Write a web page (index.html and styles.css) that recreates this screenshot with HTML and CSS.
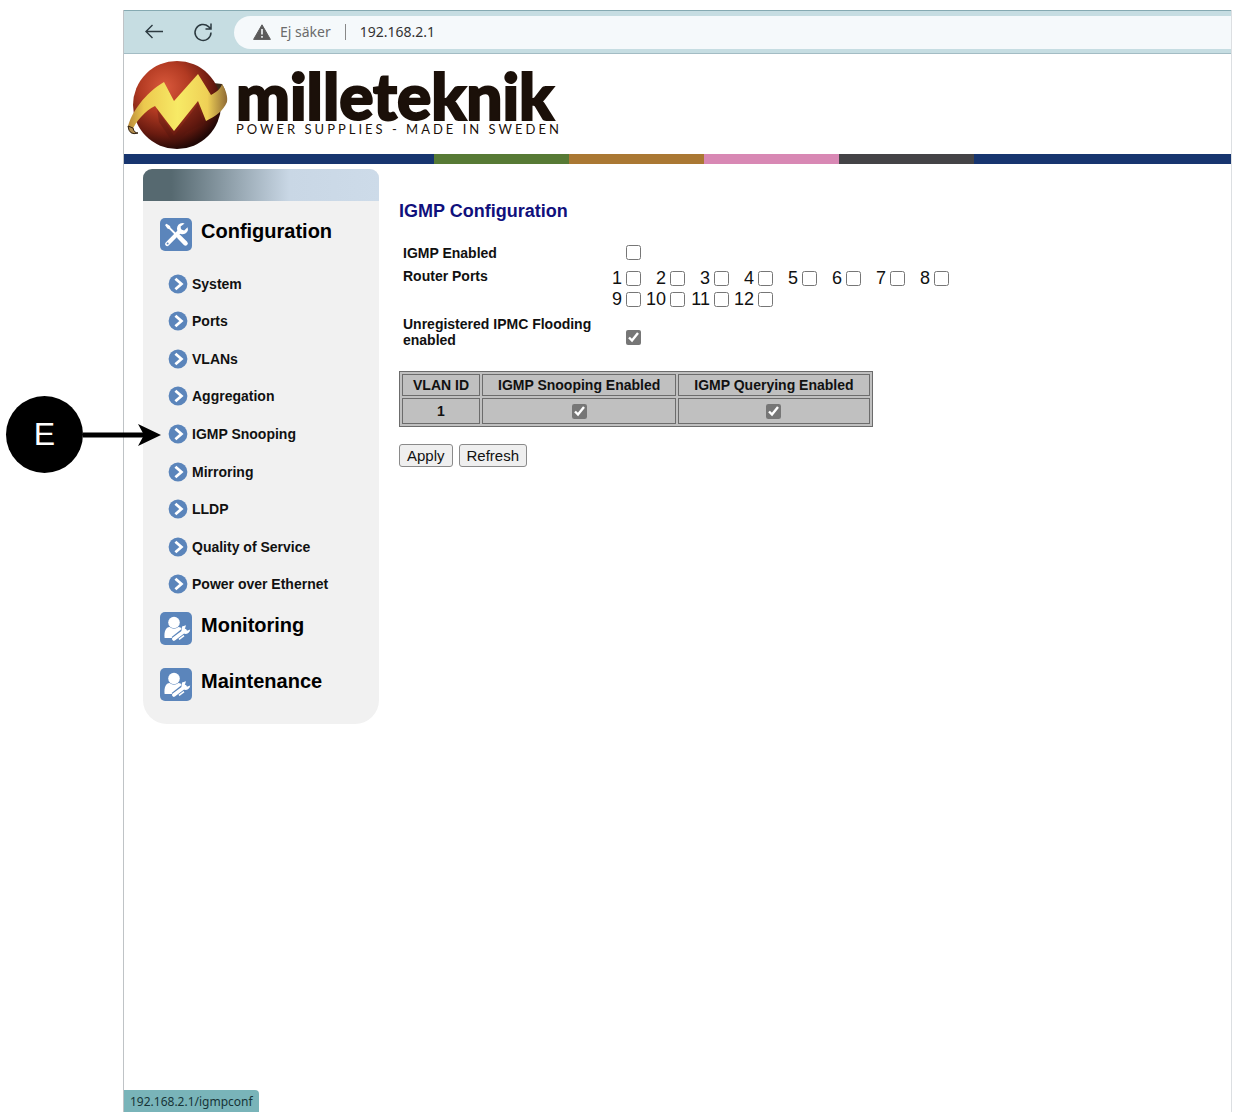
FILE: index.html
```html
<!DOCTYPE html>
<html lang="sv">
<head>
<meta charset="utf-8">
<meta name="viewport" content="width=device-width, initial-scale=1">
<title>IGMP Configuration</title>
<link rel="stylesheet" href="styles.css">
</head>
<body>
<svg class="symbols" aria-hidden="true">
  <symbol id="chevron" viewBox="0 0 20 20">
    <circle cx="10" cy="10" r="9.4" fill="#5b85bb"/>
    <path d="M7.400 4.800 L13.400 10 L7.400 15.200" fill="none" stroke="#fff" stroke-width="2.8"/>
  </symbol>
  <symbol id="tools" viewBox="0 0 32 33">
    <rect width="32" height="33" rx="5" fill="#5b85bb"/>
    <path d="M5 7 L6.500 5.800 L10 8 L10.600 9.800 L17 16 L15.600 17.400 L9.400 11.200 L7.400 10.400 Z" fill="#fff"/>
    <path d="M19.200 19 L25.500 25.400" stroke="#fff" stroke-width="4.600" stroke-linecap="round"/>
    <path d="M7.200 26 L20 13" stroke="#fff" stroke-width="4.200" stroke-linecap="round"/>
    <path d="M24.600 5.400 A5.600 5.600 0 1 0 28 12 L27.600 9.200 L24.200 12.400 L21 11.600 L20.600 8.600 Z" fill="#fff"/>
    <circle cx="7.600" cy="25.600" r="1" fill="#5b85bb"/>
  </symbol>
  <symbol id="person" viewBox="0 0 32 33">
    <rect width="32" height="33" rx="5" fill="#5b85bb"/>
    <circle cx="14" cy="10.500" r="5.800" fill="#fff"/>
    <path d="M4.600 26 C4 19 6 15 9.600 15 Q14 18.600 18.400 15 Q21 15 22 17.400 L22 22 L14 26 Z" fill="#fff"/>
    <path d="M13.600 27.400 L24.600 18.800" stroke="#5b85bb" stroke-width="6.400"/>
    <path d="M13.800 27 L25 18.600" stroke="#fff" stroke-width="3.600" stroke-linecap="round"/>
    <path d="M22 14.400 L26 13.200 L24.800 17 L26.800 18.800 L30.200 17.600 Q29.600 22 25 22 L21.400 19.400 Z" fill="#fff"/>
    <path d="M19 27.400 L24 23.600" stroke="#fff" stroke-width="1.600"/>
  </symbol>
</svg>

<div class="browser">
  <div class="toolbar">
    <button class="tool" type="button" aria-label="Back">
      <svg width="20" height="20" viewBox="0 0 20 20" fill="none" stroke="#2c3a40" stroke-width="1.4"><path d="M19 9.500H2 M8.500 3 L2 9.500 L8.500 16"/></svg>
    </button>
    <button class="tool" type="button" aria-label="Reload">
      <svg width="20" height="20" viewBox="0 0 20 20" fill="none" stroke="#2c3a40" stroke-width="1.5"><path d="M18 10.500 A8 8 0 1 1 15.500 4.600 L18 7 M18 1.500 V7 H12.500"/></svg>
    </button>
    <div class="address">
      <svg width="18" height="17" viewBox="0 0 18 17"><path d="M9 .8 L17.400 15.400 H.6 Z" fill="#5b5b5b" stroke="#5b5b5b" stroke-linejoin="round"/><path d="M9 5 V10.500 M9 12 V13.800" stroke="#f5f9fb" stroke-width="1.600"/></svg>
      <span class="insecure">Ej säker</span>
      <span class="url">192.168.2.1</span>
    </div>
  </div>

  <header class="brand">
    <svg class="globe" width="102" height="92" viewBox="0 0 102 92" aria-hidden="true">
      <defs>
        <radialGradient id="ball" cx=".36" cy=".3" r=".72">
          <stop offset="0" stop-color="#d9593c"/><stop offset=".4" stop-color="#b23a22"/><stop offset=".75" stop-color="#6a1b10"/><stop offset="1" stop-color="#210806"/>
        </radialGradient>
        <linearGradient id="ribbon" x1="0" x2="1">
          <stop offset="0" stop-color="#b98a3a"/><stop offset=".16" stop-color="#ecc94e"/><stop offset=".5" stop-color="#f7ea66"/><stop offset=".8" stop-color="#efd056"/><stop offset="1" stop-color="#8f6a35"/>
        </linearGradient>
      </defs>
      <path d="M85 26 L86 23 L95 24 L98 30 L88 36 Z" fill="#3b2819"/>
      <circle cx="50" cy="45" r="44" fill="url(#ball)"/>
      <path d="M30 48 L47 76 L71 44 L76 64 L60 72 L47 84 L32 62 Z" fill="#4c150d" opacity=".3"/>
      <path d="M1 67 C4 53 18 33 37 22 L47 41 L71 14 L84 35 C90 32 94 28 95 24 C99 30 101 37 100 42 C96 51 89 56 79 61 L71 41 L47 71 L28 46 C18 51 9 61 5 71 Z" fill="url(#ribbon)"/>
      <path d="M1 66 Q2 76 11 73 Q7 73 6 68 Z" fill="#b08b4c" stroke="#31200f"/>
    </svg>
    <div class="wordmark">
      <span class="name">milleteknik</span>
      <span class="tagline">POWER SUPPLIES - MADE IN SWEDEN</span>
    </div>
  </header>
  <div class="stripe"><i class="green"></i><i class="brown"></i><i class="pink"></i><i class="dark"></i></div>

  <div class="page">
    <nav class="menu">
      <div class="menu-cap"></div>
      <h2><svg><use href="#tools"/></svg><a href="#">Configuration</a></h2>
      <ul>
        <li><a href="#"><svg><use href="#chevron"/></svg>System</a></li>
        <li><a href="#"><svg><use href="#chevron"/></svg>Ports</a></li>
        <li><a href="#"><svg><use href="#chevron"/></svg>VLANs</a></li>
        <li><a href="#"><svg><use href="#chevron"/></svg>Aggregation</a></li>
        <li><a href="#"><svg><use href="#chevron"/></svg>IGMP Snooping</a></li>
        <li><a href="#"><svg><use href="#chevron"/></svg>Mirroring</a></li>
        <li><a href="#"><svg><use href="#chevron"/></svg>LLDP</a></li>
        <li><a href="#"><svg><use href="#chevron"/></svg>Quality of Service</a></li>
        <li><a href="#"><svg><use href="#chevron"/></svg>Power over Ethernet</a></li>
      </ul>
      <h2><svg><use href="#person"/></svg><a href="#">Monitoring</a></h2>
      <h2><svg><use href="#person"/></svg><a href="#">Maintenance</a></h2>
    </nav>

    <main>
      <h1>IGMP Configuration</h1>
      <form>
        <div class="settings">
          <label for="igmp">IGMP Enabled</label>
          <div class="ports"><span class="port"><input type="checkbox" id="igmp"></span></div>
          <span id="router">Router Ports</span>
          <div class="ports" role="group" aria-labelledby="router">
            <label class="port">1<input type="checkbox"></label>
            <label class="port">2<input type="checkbox"></label>
            <label class="port">3<input type="checkbox"></label>
            <label class="port">4<input type="checkbox"></label>
            <label class="port">5<input type="checkbox"></label>
            <label class="port">6<input type="checkbox"></label>
            <label class="port">7<input type="checkbox"></label>
            <label class="port">8<input type="checkbox"></label>
            <label class="port">9<input type="checkbox"></label>
            <label class="port">10<input type="checkbox"></label>
            <label class="port">11<input type="checkbox"></label>
            <label class="port">12<input type="checkbox"></label>
          </div>
          <label for="flood">Unregistered IPMC Flooding enabled</label>
          <div class="ports flood"><span class="port"><input type="checkbox" id="flood" checked></span></div>
        </div>
        <table>
          <thead><tr><th>VLAN ID</th><th>IGMP Snooping Enabled</th><th>IGMP Querying Enabled</th></tr></thead>
          <tbody><tr><th>1</th><td><input type="checkbox" aria-label="IGMP Snooping Enabled" checked></td><td><input type="checkbox" aria-label="IGMP Querying Enabled" checked></td></tr></tbody>
        </table>
        <div class="actions">
          <button type="button">Apply</button>
          <button type="button">Refresh</button>
        </div>
      </form>
    </main>
  </div>
  <div class="status">192.168.2.1/igmpconf</div>
</div>

<div class="callout">
  <span class="letter">E</span>
  <svg width="78" height="24" viewBox="0 0 78 24"><path d="M0 12 H62" stroke="#000" stroke-width="5"/><path d="M78 12 L55 1 L61 12 L55 23 Z"/></svg>
</div>
</body>
</html>
```
FILE: styles.css
```css
* { box-sizing: border-box; }

body {
  margin: 0;
  padding: 10px 3px 0 123px;
  position: relative;
  background: #fff;
  color: #111;
  font-family: "Liberation Sans", Arial, sans-serif;
  font-size: 14px;
  line-height: 16px;
}

a { color: inherit; text-decoration: none; }
svg { display: block; flex: none; }
.symbols { position: absolute; width: 0; height: 0; }

.browser {
  position: relative;
  min-height: calc(100vh - 10px);
  border-left: 1px solid #bfc3c6;
  border-right: 1px solid #dcdfe2;
}

.toolbar {
  display: flex;
  align-items: center;
  height: 44px;
  padding-left: 20px;
  background: #c6dde2;
  border-top: 1px solid #86aab2;
  border-bottom: 1px solid #a3bcc4;
  font-family: "Noto Sans", "Open Sans", sans-serif;
}

.tool {
  width: 20px;
  height: 20px;
  margin-right: 29px;
  padding: 0;
  border: 0;
  background: none;
}

.address {
  flex: 1;
  display: flex;
  align-items: center;
  height: 33px;
  margin-left: -8px;
  padding-left: 19px;
  background: #f5f9fb;
  border-radius: 17px 0 0 17px;
}
.insecure {
  margin-left: 9px;
  padding-right: 14px;
  border-right: 1px solid #888;
  color: #6b6b6b;
}
.url { margin-left: 14px; color: #333; }

.brand {
  display: flex;
  height: 100px;
  padding: 6px 0 0 3px;
}
.wordmark {
  display: flex;
  flex-direction: column;
  margin-left: 7px;
  padding-top: 4px;
  color: #1b1009;
  white-space: nowrap;
}
.name {
  font: 900 64px/64px Lato, sans-serif;
  -webkit-text-stroke: 2px #1b1009;
}
.tagline {
  margin-top: -6px;
  font: 13px/14px Lato, sans-serif;
  letter-spacing: 3px;
}

.stripe {
  display: flex;
  height: 10px;
  padding-left: 28%;
  background: #17356f;
}
.stripe i { flex: 0 0 135px; }
.green { background: #577a35; }
.brown { background: #aa7833; }
.pink { background: #d888b4; }
.dark { background: #444346; }

.page { display: flex; align-items: flex-start; padding: 5px 0 0 19px; }

.menu {
  flex: 0 0 236px;
  overflow: hidden;
  border-radius: 9px 9px 24px 24px;
  background: #f1f1f1;
}
.menu-cap {
  height: 32px;
  margin-bottom: 17px;
  background: linear-gradient(90deg, #566970 12%, #c9d7e5 62%, #cddbe9);
}
.menu h2 {
  display: flex;
  gap: 9px;
  height: 33px;
  margin: 0 0 23px;
  padding-left: 17px;
  color: #000;
  font-size: 20px;
  line-height: 26px;
}
.menu h2 svg { width: 32px; height: 33px; }
.menu ul {
  display: grid;
  grid-auto-rows: 1fr;
  min-height: 338px;
  margin: -9px 0 9px;
  padding: 0 0 0 25px;
  list-style: none;
}
.menu li { display: flex; align-items: center; font-weight: bold; }
.menu li a { display: flex; align-items: center; gap: 4px; }
.menu li svg { width: 20px; height: 20px; }

main { flex: 1; padding: 31px 0 0 20px; }
h1 { margin: 0 0 23px; color: #10107c; font-size: 18px; line-height: 22px; }

input[type="checkbox"] {
  width: 15px;
  height: 15px;
  margin: 0;
  accent-color: #767676;
}

.settings {
  display: grid;
  grid-template-columns: 194px 1fr;
  row-gap: 6px;
  margin-bottom: 24px;
  padding-left: 4px;
}
.settings > label, .settings > span { font-weight: bold; }
.settings > span { padding-top: 1px; }
.ports {
  display: grid;
  grid-template-columns: repeat(8, 44px);
  align-content: start;
}
.ports[role="group"] { padding-top: 1px; }
.port {
  display: flex;
  align-items: center;
  justify-content: flex-end;
  gap: 4px;
  font-size: 18px;
  line-height: 21px;
}
.port:only-child { line-height: 16px; }
.flood { align-content: end; padding-bottom: 3px; }

table {
  margin-top: -1px;
  border: 1px solid #6c6c6c;
  border-spacing: 2px;
  background: #c0c0c0;
}
th, td {
  padding: 1px 15px;
  border: 1px solid #6c6c6c;
  text-align: center;
}
th:first-child { padding: 1px 10px; }
thead th { height: 22px; }
tbody th, tbody td { height: 26px; }
td input[type="checkbox"] { display: block; margin: 0 auto; }

.actions { display: flex; gap: 6px; margin-top: 17px; }
.actions button {
  height: 23px;
  padding: 0 7px;
  border: 1px solid #8a8a8a;
  border-radius: 3px;
  background: #efefef;
  color: #111;
  font: 15px/20px "Liberation Sans", Arial, sans-serif;
}

.status {
  position: absolute;
  left: 0;
  bottom: 0;
  padding: 4px 6px 2px;
  border-top-right-radius: 4px;
  background: #79b4b9;
  color: #173438;
  font: 12px/16px "Noto Sans", "Open Sans", sans-serif;
}

.callout {
  position: absolute;
  left: 6px;
  top: 396px;
  display: flex;
  align-items: center;
}
.letter {
  width: 77px;
  height: 77px;
  border-radius: 50%;
  background: #000;
  color: #fff;
  font-size: 32px;
  line-height: 77px;
  text-align: center;
}
```
